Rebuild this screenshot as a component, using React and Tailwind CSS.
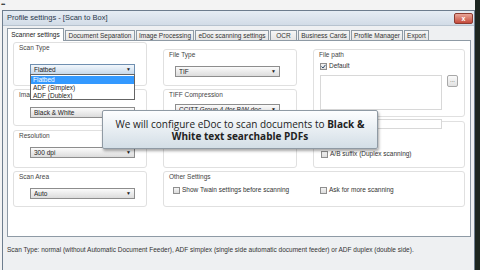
import React from "react";

const Select = ({ value, focused = false, className = "", children }) => (
  <div
    className={`relative flex items-center h-[11px] w-[105px] border ${
      focused
        ? "border-[#6f8fb0] bg-gradient-to-b from-[#f2f7fc] to-[#c8d9ea]"
        : "border-[#8d8d8d] bg-gradient-to-b from-[#fbfbfb] to-[#dcdcdc]"
    } pl-[3px] pr-[3px] ${className}`}
  >
    <span className="flex-1 truncate text-[6.5px] leading-[9px] text-[#222]">{value}</span>
    <span className="text-[5px] leading-none text-[#222]">▼</span>
    {children}
  </div>
);

const Check = ({ checked = false, label, className = "" }) => (
  <div className={`flex items-center gap-[2px] ${className}`}>
    <div className="w-[7px] h-[7px] border border-[#8f8f8f] bg-gradient-to-b from-[#f4f4f4] to-[#dcdcdc] flex items-center justify-center">
      {checked && (
        <svg width="5" height="5" viewBox="0 0 5 5">
          <path d="M0.5 2.5 L2 4 L4.5 0.8" stroke="#2b4a6b" strokeWidth="1" fill="none" />
        </svg>
      )}
    </div>
    <span className="text-[6.5px] leading-[8px] text-[#333] whitespace-nowrap">{label}</span>
  </div>
);

const Group = ({ label, className = "", children }) => (
  <div className={`relative border border-[#e0e0e0] rounded-[3px] bg-white ${className}`}>
    <div className="pl-[5px] pt-[1px] text-[6.5px] leading-[8px] text-[#444] whitespace-nowrap">{label}</div>
    {children}
  </div>
);

const tabs = [
  { name: "Document Separation", w: "w-[70px]" },
  { name: "Image Processing", w: "w-[58px]" },
  { name: "eDoc scanning settings", w: "w-[74px]" },
  { name: "OCR", w: "w-[27px]" },
  { name: "Business Cards", w: "w-[52px]" },
  { name: "Profile Manager", w: "w-[52px]" },
  { name: "Export", w: "w-[25px]" },
];

export default function App() {
  return (
    <div className="relative w-[480px] h-[270px] overflow-hidden flex bg-[#f3f3f3] font-['Liberation_Sans',Arial,sans-serif] text-[#222]">
      <div className="flex-1 flex flex-col">
        {/* top strip */}
        <div className="h-[10px] flex items-start pl-[1px] pt-[1px] text-[6px] leading-[6px] tracking-[-1px] text-[#333]">
          •••
        </div>

        {/* window */}
        <div className="flex-1 flex flex-col ml-[2px] border-l border-t border-r border-[#6d7d8e]">
          {/* title bar */}
          <div className="h-[15px] flex items-center pl-[4px] pr-[1px] bg-gradient-to-b from-[#e6edf4] to-[#d2dce7] border-b border-[#b7c3cf]">
            <span className="flex-1 text-[7.5px] leading-none text-[#2a3a4c]">
              Profile settings - [Scan to Box]
            </span>
            <div className="w-[19px] h-[11px] rounded-[2px] border border-[#8c3b30] bg-gradient-to-b from-[#e8a598] to-[#c4493b] flex items-center justify-center text-white text-[7px] leading-none font-bold">
              x
            </div>
          </div>

          {/* body */}
          <div className="flex-1 flex flex-col bg-[#eef0f2] pt-[2px]">
            {/* tabs */}
            <div className="flex items-end ml-[4px] h-[13px]">
              <div className="w-[57px] h-[13px] bg-white border border-b-0 border-[#8e9aa5] flex items-center justify-center text-[6.5px] leading-none text-[#222] whitespace-nowrap relative z-10">
                Scanner settings
              </div>
              {tabs.map((t) => (
                <div
                  key={t.name}
                  className={`${t.w} h-[11px] ml-[1px] border border-b-0 border-[#8e9aa5] bg-gradient-to-b from-[#f6f6f6] to-[#e3e3e3] flex items-center justify-center text-[6.5px] leading-none text-[#333] whitespace-nowrap overflow-hidden`}
                >
                  {t.name}
                </div>
              ))}
            </div>

            {/* panel */}
            <div className="ml-[4px] w-[464px] h-[197px] -mt-px border border-[#8e9aa5] bg-white flex pl-[5px]">
              {/* column 1 */}
              <div className="w-[134px] flex flex-col">
                <Group label="Scan Type" className="mt-[1px] h-[44px] z-20">
                  <Select value="Flatbed" focused className="mt-[12px] ml-[16px]">
                    <div className="absolute left-[-1px] top-full w-[105px] h-[26px] border border-[#646464] bg-white pt-[1px]">
                      <div className="h-[8px] bg-[#3399ff] text-white text-[6.5px] leading-[8px] pl-[2px]">Flatbed</div>
                      <div className="h-[8px] text-[6.5px] leading-[8px] pl-[2px] text-[#222]">ADF (Simplex)</div>
                      <div className="h-[8px] text-[6.5px] leading-[8px] pl-[2px] text-[#222]">ADF (Dublex)</div>
                    </div>
                  </Select>
                </Group>
                <Group label="Image" className="mt-[3px] h-[37px]">
                  <Select value="Black & White" className="mt-[8px] ml-[16px]" />
                </Group>
                <Group label="Resolution" className="mt-[4px] h-[38px]">
                  <Select value="300 dpi" className="mt-[7px] ml-[16px]" />
                </Group>
                <Group label="Scan Area" className="mt-[3px] h-[36px]">
                  <Select value="Auto" className="mt-[7px] ml-[16px]" />
                </Group>
              </div>

              {/* columns 2 + 3 */}
              <div className="ml-[16px] w-[302px] flex flex-col">
                <div className="mt-[8px] h-[119px] flex gap-[16px]">
                  <div className="w-[134px] flex flex-col">
                    <Group label="File Type" className="h-[37px]">
                      <Select value="TIF" className="mt-[7px] ml-[11px]" />
                    </Group>
                    <Group label="TIFF Compression" className="mt-[3px] h-[37px]">
                      <Select value="CCITT Group 4 (for B/W documents)" className="mt-[5px] ml-[11px]" />
                    </Group>
                    <Group label="" className="mt-[4px] h-[38px]" />
                  </div>
                  <div className="w-[152px] flex flex-col">
                    <Group label="File path" className="h-[68px]">
                      <Check checked label="Default" className="mt-[3px] ml-[6px]" />
                      <div className="flex mt-[5px] ml-[6px]">
                        <div className="w-[122px] h-[35px] border border-[#d8d8d8] bg-white" />
                        <div className="ml-[5px] w-[11px] h-[12px] border border-[#a8a8a8] rounded-[2px] bg-gradient-to-b from-[#fafafa] to-[#e2e2e2] text-[6px] leading-[8px] text-center text-[#444]">
                          ...
                        </div>
                      </div>
                    </Group>
                    <Group label="" className="mt-[4px] h-[47px]">
                      <div className="ml-[6px] mt-[-4px] w-[122px] h-[10px] border border-[#d8d8d8] bg-white" />
                      <Check label="A/B suffix (Duplex scanning)" className="mt-[21px] ml-[7px]" />
                    </Group>
                  </div>
                </div>
                <Group label="Other Settings" className="mt-[3px] h-[36px]">
                  <div className="flex mt-[5px]">
                    <Check label="Show Twain settings before scanning" className="ml-[9px] w-[147px]" />
                    <Check label="Ask for more scanning" />
                  </div>
                </Group>
              </div>
            </div>

            {/* status */}
            <div className="mt-[9px] pl-[4px] text-[6.5px] leading-[8px] text-[#333] whitespace-nowrap">
              Scan Type: normal (without Automatic Document Feeder), ADF simplex (single side automatic document feeder) or ADF duplex (double side).
            </div>
          </div>
        </div>
      </div>
      <div className="w-[5px] bg-[#1d2620]" />

      {/* tooltip overlay */}
      <div className="absolute left-[102px] top-[110px] w-[276px] h-[39px] rounded-[2px] border border-[#8f9aa4] bg-gradient-to-b from-[#fdfeff] to-[#d3dee6] shadow-[1px_2px_3px_rgba(0,0,0,0.35)] flex flex-col items-center justify-center font-['Open_Sans',sans-serif] text-[10px] leading-[12px] text-[#222]">
        <div>
          We will configure eDoc to scan documents to <span className="font-bold">Black &amp;</span>
        </div>
        <div className="font-bold">White text searchable PDFs</div>
      </div>
    </div>
  );
}
